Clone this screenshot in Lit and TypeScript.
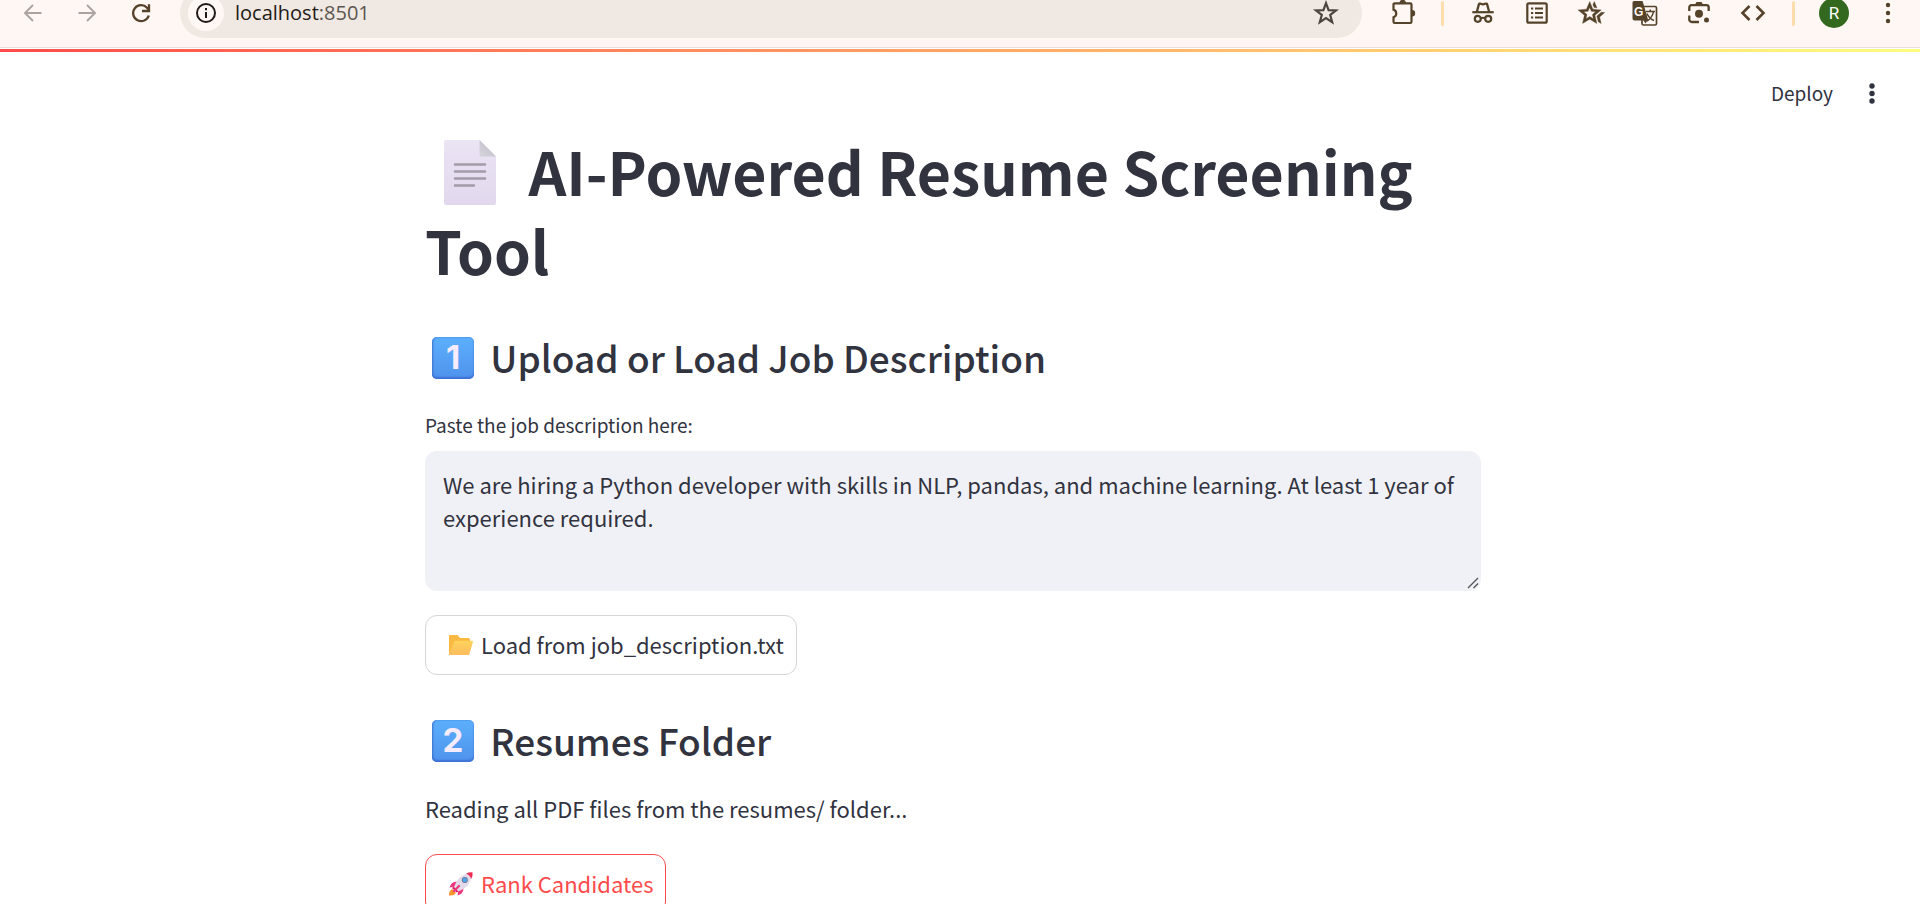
import { LitElement, html, css, svg } from "lit";
import { customElement, property } from "lit/decorators.js";

const icons: Record<string, unknown> = {
  back: svg`<path d="M20.5 12H4.5M12 4L4 12l8 8" fill="none" stroke="currentColor" stroke-width="1.9"/>`,
  forward: svg`<path d="M3.500 12H19.500M12 4l8 8-8 8" fill="none" stroke="currentColor" stroke-width="1.9"/>`,
  reload: svg`<path d="M19.8 14.500A8 8 0 1 1 18 6.700L20 9" fill="none" stroke="currentColor" stroke-width="2.300"/><path d="M20 3.200V10h-7" fill="none" stroke="currentColor" stroke-width="2.300"/>`,
  info: svg`<circle cx="12" cy="12" r="9" fill="none" stroke="currentColor" stroke-width="2"/><path d="M11 11h2v6h-2zM11 7h2v2.300h-2z"/>`,
  star: svg`<path d="M12 2.200l2.600 6.900 7.400.3-5.800 4.600 2 7.100-6.200-4.100-6.200 4.100 2-7.100L2 9.400l7.400-.3z" fill="none" stroke="currentColor" stroke-width="2.200"/>`,
  puzzle: svg`<path d="M3.500 3.500a1.200 1.200 0 0 1 1.200-1.200h15.600a1.200 1.200 0 0 1 1.200 1.200v17.300a1.200 1.200 0 0 1-1.200 1.200H4.700a1.200 1.200 0 0 1-1.200-1.200v-4.600a4 4 0 0 0 0-7.600z" fill="none" stroke="currentColor" stroke-width="2.200"/><path d="M9.500 2a3.200 3.200 0 0 1 6.400 0zM22 9a3.200 3.200 0 0 1 0 6.400z"/>`,
  incognito: svg`<path d="M1.300 10.100h21.400v2.200H1.300z"/><path d="M5.800 11l2-7.400c.3-1 1.200-1.200 2-.8 1.500.8 2.900.8 4.400 0 .8-.4 1.700-.2 2 .8l2 7.400" fill="none" stroke="currentColor" stroke-width="2.300"/><circle cx="6.800" cy="17.800" r="3" fill="none" stroke="currentColor" stroke-width="2.200"/><circle cx="17.200" cy="17.800" r="3" fill="none" stroke="currentColor" stroke-width="2.200"/><path d="M9.500 17.500q2.500-1.300 5 0" fill="none" stroke="currentColor" stroke-width="2"/>`,
  list: svg`<rect x="2.300" y="2.300" width="19.400" height="19.400" rx="1.500" fill="none" stroke="currentColor" stroke-width="2.200"/><path d="M6 6.500h2.200v2H6zM6 11h2.200v2H6zM6 15.500h2.200v2H6zM10 6.500h8v2h-8zM10 11h8v2h-8zM10 15.500h8v2h-8z"/>`,
  starPlus: svg`<path transform="translate(-1.500 26) scale(.029)" stroke="currentColor" stroke-width="12" d="m668-380 152-130 120 10-176 153 52 227-102-62-46-198Zm-94-292-42-98 46-110 92 217-96-9ZM294-287l126-76 126 77-33-144 111-96-146-13-58-136-58 135-146 13 111 97-33 143ZM173-120l65-281L20-590l288-25 112-265 112 265 288 25-218 189 65 281-247-149-247 149Zm247-361Z"/>`,
  lens: svg`<path d="M2.300 10V6.500A2.300 2.300 0 0 1 4.600 4.200h14.800a2.300 2.300 0 0 1 2.300 2.300V10M2.300 14.500v4a2.500 2.500 0 0 0 2.500 2.500H12" fill="none" stroke="currentColor" stroke-width="2.300"/><path d="M8 3.500L9.500 1h5L16 3.500z"/><circle cx="12" cy="12.800" r="4"/><circle cx="19.500" cy="19" r="2.500"/>`,
  code: svg`<path d="M8.500 5L1.500 12l7 7M15.500 5l7 7-7 7" fill="none" stroke="currentColor" stroke-width="2.600"/>`,
  dots: svg`<circle cx="12" cy="4" r="2.200"/><circle cx="12" cy="12" r="2.200"/><circle cx="12" cy="20" r="2.200"/>`,
};

@customElement("tool-button")
class ToolButton extends LitElement {
  @property() icon = "";
  @property() label = "";

  static styles = css`
    :host { display: flex; width: 54px; justify-content: center; }
    .button {
      display: flex; padding: 0; border: 0; background: none; color: inherit;
    }
    .glyph { width: 24px; height: 24px; fill: currentColor; overflow: visible; }
  `;

  render() {
    return html`<button class="button" aria-label=${this.label}>
      <svg class="glyph" viewBox="0 0 24 24">${icons[this.icon]}</svg>
    </button>`;
  }
}

@customElement("browser-bar")
class BrowserBar extends LitElement {
  static styles = css`
    :host {
      display: block; flex: none; height: 48px; overflow: hidden;
      box-sizing: border-box;
      background: #fff7f3; border-bottom: 1px solid #e8dfdc;
      font-family: "Open Sans", sans-serif; color: #54432a;
    }
    .row {
      display: flex; align-items: center; height: 48px; margin-top: -11px;
      padding: 0 5px 0 6px;
    }
    .faded { color: #a9a4a1; }
    .address {
      flex: 1; display: flex; align-items: center; height: 50px;
      margin: 0 13px 0 12px; padding: 0 9px 0 8px; box-sizing: border-box;
      border-radius: 25px; background: #f0e8e2; color: #1f1b16;
    }
    .site {
      display: flex; align-items: center; justify-content: center;
      width: 36px; height: 36px; padding: 0; border: 0; border-radius: 50%;
      background: #fff7f3; color: inherit;
    }
    .glyph { width: 24px; height: 24px; fill: currentColor; }
    .url { flex: 1; margin-left: 11px; font-size: 20px; line-height: 28px; }
    .port { color: #5b5650; }
    .star { color: #4b4540; }
    .divider { width: 27px; display: flex; justify-content: center; }
    .divider::before {
      content: ""; width: 3px; height: 25px; border-radius: 2px; background: #ffdcac;
    }
    .cell { width: 54px; display: flex; justify-content: center; }
    .translate, .avatar { display: flex; padding: 0; border: 0; background: none; color: inherit; }
    .translate-glyph { width: 26px; height: 26px; overflow: visible; }
    .avatar {
      align-items: center; justify-content: center;
      width: 30px; height: 30px; border-radius: 50%;
      background: #33691e; color: #fff; font: 17px Roboto, sans-serif;
    }
  `;

  render() {
    return html`
      <nav class="row" aria-label="Browser toolbar">
        <tool-button class="faded" icon="back" label="Back"></tool-button>
        <tool-button class="faded" icon="forward" label="Forward"></tool-button>
        <tool-button icon="reload" label="Reload"></tool-button>
        <div class="address">
          <button class="site" aria-label="Site information">
            <svg class="glyph" viewBox="0 0 24 24">${icons.info}</svg>
          </button>
          <span class="url">localhost<span class="port">:8501</span></span>
          <tool-button class="star" icon="star" label="Bookmark"></tool-button>
        </div>
        <tool-button icon="puzzle" label="Extensions"></tool-button>
        <span class="divider"></span>
        <tool-button icon="incognito" label="Incognito"></tool-button>
        <tool-button icon="list" label="Reading list"></tool-button>
        <tool-button icon="starPlus" label="Bookmarks"></tool-button>
        <span class="cell">
          <button class="translate" aria-label="Translate">
            <svg class="translate-glyph" viewBox="0 0 26 26">
              <rect x="10" y="6.500" width="14.500" height="18.500" rx="1.500" fill="#fff7f3" stroke="#54432a" stroke-width="1.700" />
              <path d="M2 1h8.500l1.300 4L16 19.500l-2.500 4-2-3H2.500a2 2 0 0 1-2-2V2.500A1.500 1.500 0 0 1 2 1z" fill="#54432a" />
              <text x="2" y="15.500" font-size="12" font-weight="700" fill="#fff7f3">G</text>
              <path d="M14 11.500h9M18.300 9.500v2M15 13.500q2 5 7 7M21.500 11.500q-1 6-6.500 9.500" fill="none" stroke="#54432a" stroke-width="1.500" />
            </svg>
          </button>
        </span>
        <tool-button icon="lens" label="Search with lens"></tool-button>
        <tool-button icon="code" label="Developer tools"></tool-button>
        <span class="divider"></span>
        <span class="cell"><button class="avatar" aria-label="Profile">R</button></span>
        <tool-button icon="dots" label="Browser menu"></tool-button>
      </nav>
    `;
  }
}

@customElement("app-root")
class AppRoot extends LitElement {
  static styles = css`
    :host {
      display: flex; flex-direction: column; height: 100vh; overflow: hidden;
      background: #fff; color: #31333f;
      font-family: "Noto Sans CJK SC", "Noto Sans", sans-serif;
    }
    .decoration {
      flex: none; height: 3px; margin-top: 1px;
      background: linear-gradient(to right, #ff4b4b, #fffd80);
    }
    .scroller { flex: 1; overflow-y: auto; scrollbar-width: none; padding-right: 14px; }
    .header {
      display: flex; justify-content: flex-end; align-items: center; gap: 24px;
      padding: 25px 19px 0 0; height: 32px;
    }
    .deploy, .menu { padding: 0; border: 0; background: none; color: inherit; font: inherit; }
    .deploy { font-size: 19px; line-height: 32px; }
    .menu { display: flex; width: 30px; justify-content: center; }
    .menu-glyph { width: 24px; height: 24px; fill: currentColor; }
    .content { max-width: 1056px; margin: 0 auto; padding: 22px 24px 96px; }
    .title { margin: 0; font-size: 59px; line-height: 79px; font-weight: 700; }
    .page-glyph { width: 52px; height: 65px; margin: 0 19px; vertical-align: -9px; }
    .section { margin: 43px 0 0; font-size: 37px; line-height: 50px; font-weight: 500; }
    .section.later { margin-top: 40px; }
    .key {
      display: inline-block; box-sizing: border-box; width: 42px; height: 42px; margin: 0 8px 0 7px;
      vertical-align: 4px; border-radius: 5px; text-align: center;
      background: linear-gradient(#5cb0fd, #4f92ec);
      box-shadow: inset 1px 0 2px #3f78d0, inset 0 -2px 2px #3f6fd6;
      color: #f7ecff; font: 700 33px/40px Inter, sans-serif;
    }
    .label { display: block; margin-top: 27px; font-size: 19px; line-height: 32px; }
    .field { position: relative; margin: 10px 0 24px; }
    .area {
      display: block; width: 100%; height: 140px; box-sizing: border-box;
      padding: 17px 18px; border: 0; border-radius: 12px;
      background: #f0f1f6; color: inherit; font-family: inherit;
      font-size: 22px; line-height: 33px; resize: none; outline: none;
    }
    .grip { position: absolute; right: 2px; bottom: 2px; width: 12px; height: 12px; pointer-events: none; }
    .text { margin: 24px 0 27px; font-size: 22px; line-height: 38px; }
    .action {
      display: flex; align-items: center; height: 60px; padding: 0 12px 3px 18px;
      border: 1px solid #d5d6d9; border-radius: 12px; background: #fff;
      color: inherit; font-family: inherit; font-size: 22px; line-height: 38px;
    }
    .action.active { border-color: #ff4b4b; color: #ff4b4b; }
    .emoji { width: 24px; height: 24px; margin: 3px 8px 0 5px; }
  `;

  render() {
    return html`
      <browser-bar></browser-bar>
      <div class="decoration"></div>
      <div class="scroller">
        <header class="header">
          <button class="deploy">Deploy</button>
          <button class="menu" aria-label="Main menu">
            <svg class="menu-glyph" viewBox="0 0 24 24">
              <circle cx="12" cy="5" r="2.700" /><circle cx="12" cy="12.500" r="2.700" /><circle cx="12" cy="20" r="2.700" />
            </svg>
          </button>
        </header>
        <main class="content">
          <h1 class="title"><svg class="page-glyph" viewBox="0 0 52 65" aria-hidden="true">
              <defs>
                <linearGradient id="sheet" x2="0" y2="1"><stop stop-color="#ebe4f4" /><stop offset="1" stop-color="#e2d8ee" /></linearGradient>
                <linearGradient id="fold" x1="0" y1="1" x2="1" y2="0"><stop stop-color="#d8d4dd" /><stop offset="1" stop-color="#bdb9c2" /></linearGradient>
              </defs>
              <path d="M2 0h33.500L52 16.500V63a2 2 0 0 1-2 2H2a2 2 0 0 1-2-2V2a2 2 0 0 1 2-2z" fill="url(#sheet)" />
              <path d="M35.500 0L52 16.500H37a1.500 1.500 0 0 1-1.500-1.500z" fill="url(#fold)" />
              <path d="M11 24.500h30M11 31.500h30M11 38.500h30M11 45.500h19" stroke="#a29ba8" stroke-width="2.600" stroke-linecap="round" />
            </svg> AI-Powered Resume Screening Tool</h1>

          <h2 class="section"><span class="key">1</span> Upload or Load Job Description</h2>
          <label class="label" for="job">Paste the job description here:</label>
          <div class="field">
            <textarea class="area" id="job" spellcheck="false" .value=${"We are hiring a Python developer with skills in NLP, pandas, and machine learning. At least 1 year of experience required."}></textarea>
            <svg class="grip" viewBox="0 0 12 12" aria-hidden="true">
              <path d="M1 11L11 1M6.500 11L11 6.500" fill="none" stroke="#55565c" stroke-width="1.400" />
            </svg>
          </div>
          <button class="action">
            <svg class="emoji" viewBox="0 0 24 24" aria-hidden="true">
              <defs>
                <linearGradient id="front" x2="0" y2="1"><stop stop-color="#ffd35c" /><stop offset="1" stop-color="#ffbc5e" /></linearGradient>
              </defs>
              <path d="M1 2h7.500l2.500 3h8.500a1.500 1.500 0 0 1 1.500 1.500V12L3 22H1a1 1 0 0 1-1-1V3a1 1 0 0 1 1-1z" fill="#fcb941" />
              <path d="M7 7.800h16q1.200 0 .9 1.200l-3.400 12q-.3 1-1.500 1H1.200q-1.200 0-.9-1.200L5 9q.5-1.200 2-1.200z" fill="url(#front)" />
            </svg>Load from job_description.txt
          </button>

          <h2 class="section later"><span class="key">2</span> Resumes Folder</h2>
          <p class="text">Reading all PDF files from the resumes/ folder...</p>
          <button class="action active">
            <svg class="emoji" viewBox="0 0 24 24" aria-hidden="true">
              <path d="M0 23.500q-.5-4 3-6.500l4 4q-2 3-7 2.500z" fill="#f9932d" />
              <path d="M8.500 9.500q-6-.5-8 6l6-1zM14.500 15.500q.5 6-6 8l1-6z" fill="#f0357f" />
              <path d="M5 15.500Q8 3.500 20 1l3 3q-2.500 12-14 15.500z" fill="#e2dae8" />
              <path d="M17 1.800Q20 0 23.600.4 24 4 22.200 7q-1-3.800-5.200-5.200z" fill="#ed2b55" />
              <path d="M4.500 14.500l5 5-2 1-4.500-4.500z" fill="#d7235f" />
              <circle cx="15.800" cy="8" r="3" fill="#6d6f88" /><circle cx="15.800" cy="8" r="2.200" fill="#4ea5f2" />
              <path d="M5 19l5-5" stroke="#f0357f" stroke-width="2.200" stroke-linecap="round" />
            </svg>Rank Candidates
          </button>
        </main>
      </div>
    `;
  }
}
